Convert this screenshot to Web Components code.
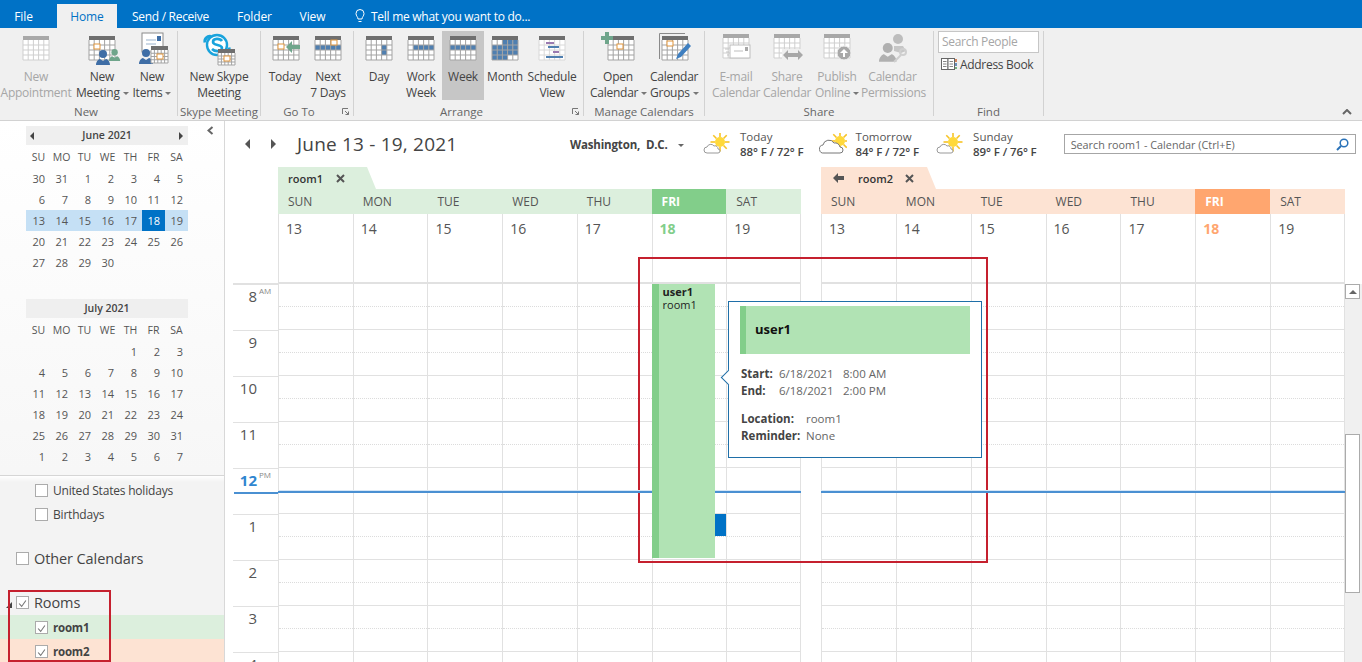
<!DOCTYPE html>
<html lang="en">
<head>
<meta charset="utf-8">
<title>Calendar - Outlook</title>
<style>
  html, body { margin: 0; height: 662px; overflow: hidden; background: #fff; }
  body { font: 12px "Open Sans", "Noto Sans", sans-serif; color: #444; }
</style>
</head>
<body>
<ol-app></ol-app>
<script>
// icon helpers
const calendar = (x, y, opts = {}) => {
  const { head = '#6f6f6f', line = '#a3a3a3', cells = [], w = 26, h = 24 } = opts;
  let out = `<rect x="${x}" y="${y}" width="${w}" height="${h}" fill="#fff"/>`;
  const cw = w / 5;
  const ch = (h - 4) / 4;
  cells.forEach(([c, r, color]) => {
    out += `<rect x="${x + c * cw}" y="${y + 4 + r * ch}" width="${cw}" height="${ch}" fill="${color}"/>`;
  });
  for (let i = 0; i <= 5; i++) out += `<path d="M${x + i * cw} ${y + 4}v${h - 4}" stroke="${line}" fill="none"/>`;
  for (let i = 1; i <= 4; i++) out += `<path d="M${x} ${y + 4 + i * ch}h${w}" stroke="${line}" fill="none"/>`;
  out += `<rect x="${x}" y="${y}" width="${w}" height="4" fill="${head}"/>`;
  return out;
};
const orange = (x, y) => `<rect x="${x}" y="${y}" width="6" height="5" fill="#fff" stroke="#e0953c"/>`;
const person = (x, y, c, s = 1) => `<g transform="translate(${x} ${y}) scale(${s})" fill="${c}"><circle cx="7" cy="4" r="4"/><path d="M0 15c0-4 3-6 4-6l3 2 3-2c1 0 4 2 4 6z"/></g>`;
const blue = '#4f7fb0';
const dim = { head: '#a8a8a8', line: '#cfcfcf' };
const weekRow = (from, to) => { const c = []; for (let i = from; i <= to; i++) c.push([i, 1, blue]); return c; };

const ICONS = {
  appointment: calendar(6, 4, dim),
  meeting: calendar(6, 4, { cells: [] }) + orange(11, 12) + person(13, 18, '#3f6ea6') + person(26, 17, '#6fa58b', .8),
  items: `<rect x="9" y="1" width="21" height="19" fill="#fff" stroke="#8a8a8a"/><path d="M13 8h10M13 12h10" stroke="#9bb3cc"/><rect x="24" y="4" width="4" height="5" fill="#3f6ea6"/>` + person(6, 17, '#3f6ea6') + calendar(18, 14, { w: 17, h: 17 }) + orange(24, 22),
  skype: `<circle cx="17" cy="13" r="10" fill="#fff" stroke="#19a3dc" stroke-width="2.4"/><path d="M11 4.5a5 5 0 0 0-6 6M23 21.500a5 5 0 0 0 6-6" stroke="#19a3dc" stroke-width="3" fill="none"/><path d="M22 9c-2-3-9-3-9 1 0 4 9 2 9 6 0 4-7 4-10 1" stroke="#19a3dc" stroke-width="2.6" fill="none"/>` + calendar(18, 17, { w: 17, h: 16 }) + orange(24, 24),
  today: calendar(6, 4) + orange(11, 12) + `<path d="M19 15l6-6v4h8v4h-8v4z" fill="#6fa58b"/>`,
  next: calendar(6, 4, { cells: weekRow(0, 4) }) + orange(22, 8),
  day: calendar(6, 4, { cells: [[3, 1, blue], [3, 2, blue]] }),
  workweek: calendar(6, 4, { cells: weekRow(1, 4) }),
  week: calendar(6, 4, { cells: weekRow(0, 4) }),
  month: calendar(6, 4, { cells: [[2, 0, blue], [3, 0, blue], [4, 0, blue], [0, 1, blue], [1, 1, blue], [2, 1, blue], [3, 1, blue], [4, 1, blue], [0, 2, blue], [1, 2, blue], [2, 2, blue], [3, 2, blue], [4, 2, blue], [0, 3, blue], [1, 3, blue], [2, 3, blue]] }),
  schedule: calendar(6, 4, { line: '#d8d8d8' }) + `<rect x="13" y="10" width="8" height="2" fill="#9a7ab0"/><rect x="15" y="14" width="11" height="2" fill="${blue}"/><rect x="20" y="19" width="6" height="2" fill="#9a7ab0"/><rect x="13" y="24" width="17" height="2" fill="${blue}"/>`,
  open: calendar(9, 4) + orange(18, 12) + `<path d="M6 0h4v4h4v4h-4v4H6V8H2V4h4z" fill="#6fa58b"/>`,
  groups: `<path d="M4.500 27V1.500H30" stroke="#8a8a8a" fill="none"/>` + calendar(7, 4) + orange(12, 9) + `<path d="M21 27l2-5 10-11 3 3-10 11z" fill="#3f7fc0"/>`,
  email: calendar(6, 2, dim) + `<rect x="13" y="13" width="20" height="13" fill="#fff" stroke="#bdbdbd"/><path d="M17 19h9" stroke="#bdbdbd"/><rect x="28" y="15" width="3" height="4" fill="#a8a8a8"/><path d="M8 17h4M9 20h3M10 23h2" stroke="#c4c4c4"/>`,
  share: calendar(6, 2, dim) + `<rect x="14" y="17" width="22" height="12" fill="#f0f0f0"/><path d="M15 23l5-5v3h10v-3l5 5-5 5v-3H20v3z" fill="#a8a8a8"/>`,
  publish: calendar(6, 2, dim) + `<circle cx="26" cy="21" r="7" fill="#a8a8a8" stroke="#f0f0f0"/><path d="M26 17l4 4h-3v4h-2v-4h-3z" fill="#fff"/>`,
  permissions: person(5, 11, '#b0b0b0', 1.25) + `<circle cx="24" cy="7" r="5" fill="#bdbdbd"/><path d="M20 14h9l3 5-5 2-7-2z" fill="#c6c6c6"/><circle cx="29" cy="20" r="3" fill="none" stroke="#cfcfcf" stroke-width="2"/><path d="M27 23l-7 7" stroke="#cfcfcf" stroke-width="2"/>`
};

const weather = (big) => {
  let rays = '';
  for (let i = 0; i < 8; i++) {
    const a = i * Math.PI / 4;
    rays += `<path d="M${17 + 5 * Math.cos(a)} ${9 + 5 * Math.sin(a)}L${17 + 9.500 * Math.cos(a)} ${9 + 9.500 * Math.sin(a)}" stroke="#f7c325" stroke-width="1.600"/>`;
  }
  const sun = `<circle cx="17" cy="9" r="5" fill="#ffd93b"/>${rays}`;
  const cloud = big
    ? `<path d="M5 20a4 4 0 0 1-1-8 6 6 0 0 1 11-2 5 5 0 0 1 6 4 3 3 0 0 1 0 6z" fill="#fff" stroke="#777"/>`
    : `<path d="M4 20a3 3 0 0 1 0-6 4 4 0 0 1 7-1 3 3 0 0 1 4 3 2 2 0 0 1 0 4z" fill="#fff" stroke="#999"/>`;
  return `<svg width="28" height="22" viewBox="0 0 28 22">${big ? `<g transform="translate(4 -1)">${sun}</g>` : sun}${cloud}</svg>`;
};

class OlTabs extends HTMLElement {
  constructor() {
    super();
    this.attachShadow({ mode: 'open' }).innerHTML = `
      <style>
        :host { display: flex; height: 28px; background: #0072c6; color: #fff; font-size: 12px; box-sizing: border-box; padding-top: 4px; letter-spacing: -.1px; }
        span { display: flex; align-items: center; justify-content: center; height: 24px; white-space: nowrap; flex: none; }
        .home { background: #f0f0f0; color: #0072c6; }
        svg { margin-right: 6px; }
      </style>
      <span style="width:57px;padding-right:10px;box-sizing:border-box">File</span>
      <span class="home" style="width:60px">Home</span>
      <span style="margin-left:15px;width:77px;letter-spacing:-.3px">Send / Receive</span>
      <span style="margin-left:29px;width:33px">Folder</span>
      <span style="margin-left:29px;width:25px">View</span>
      <span style="margin-left:30px;letter-spacing:-.27px">
        <svg width="10" height="14" viewBox="0 0 10 14" fill="none" stroke="#fff"><path d="M3 10C3 8 1 7 1 4.500a4 4 0 0 1 8 0C9 7 7 8 7 10zM3.500 12.500h3"/></svg>
        Tell me what you want to do...
      </span>`;
  }
}

class OlBtn extends HTMLElement {
  constructor() {
    super();
    const w = this.getAttribute('w') || 42;
    const icon = ICONS[this.getAttribute('icon')] || '';
    const caret = this.hasAttribute('caret') ? '<i></i>' : '';
    this.attachShadow({ mode: 'open' }).innerHTML = `
      <style>
        :host { display: block; height: 69px; width: ${w}px; flex: none; text-align: center; line-height: 16px; font-size: 12px; color: #444; margin-left: ${this.getAttribute('ml') || 0}px; }
        :host([disabled]) { color: #a6a6a6; }
        :host([active]) { background: #c6c6c6; }
        svg { display: block; margin: 1px auto 0; width: 38px; height: 36px; }
        .lbl { display: block; margin-top: 1px; white-space: nowrap; letter-spacing: -.25px; }
        i { display: inline-block; margin-left: 3px; vertical-align: 2px; border: 3px solid transparent; border-top-color: #777; border-bottom: 0; }
      </style>
      <svg viewBox="0 0 38 36">${icon}</svg>
      <span class="lbl"><slot></slot>${caret}</span>`;
  }
}

class OlGroup extends HTMLElement {
  constructor() {
    super();
    const launcher = this.hasAttribute('launcher')
      ? '<svg class="launch" width="7" height="7" viewBox="0 0 7 7" fill="none" stroke="#777"><path d="M.5 6V.5H6M3 3l3.500 3.500M6.500 3.500v3h-3"/></svg>'
      : '';
    this.attachShadow({ mode: 'open' }).innerHTML = `
      <style>
        :host { display: flex; flex-direction: column; position: relative; flex: none; box-sizing: border-box; width: ${this.getAttribute('w')}px; height: 85px; margin-top: 3px; border-right: 1px solid #d2d2d2; }
        .body { display: flex; height: 73px; justify-content: ${this.getAttribute('justify') || 'flex-start'}; padding-left: ${this.getAttribute('pl') || 0}px; }
        .cap { text-align: center; height: 12px; line-height: 16px; font-size: 11.500px; color: #666; white-space: nowrap; padding-right: ${this.getAttribute('cap-pr') || 0}px; }
        .launch { position: absolute; right: 4px; bottom: 1px; }
      </style>
      <div class="body"><slot></slot></div>
      <div class="cap">${this.getAttribute('label')}</div>${launcher}`;
  }
}

class OlRibbon extends HTMLElement {
  constructor() {
    super();
    this.attachShadow({ mode: 'open' }).innerHTML = `
      <style>
        :host { display: flex; position: relative; height: 93px; box-sizing: border-box; background: #f0f0f0; border-bottom: 1px solid #d2d2d2; }
        .up { position: absolute; right: 10px; bottom: 5px; }
      </style>
      <slot></slot>
      <svg class="up" width="10" height="6" viewBox="0 0 10 6" fill="none" stroke="#666" stroke-width="2"><path d="M1 5l4-4 4 4"/></svg>`;
  }
}

class OlFind extends HTMLElement {
  constructor() {
    super();
    this.attachShadow({ mode: 'open' }).innerHTML = `
      <style>
        :host { display: flex; flex-direction: column; padding: 0 0 0 4px; font-size: 12px; letter-spacing: -.3px; }
        .box { box-sizing: border-box; width: 101px; height: 22px; background: #fff; border: 1px solid #c6c6c6; color: #a6a6a6; line-height: 20px; padding-left: 3px; }
        .ab { display: flex; align-items: center; gap: 3px; height: 16px; margin: 3px 0 0 3px; color: #444; }
      </style>
      <div class="box">Search People</div>
      <div class="ab">
        <svg width="16" height="13" viewBox="0 0 16 13" fill="#fff" stroke="#666"><rect x=".5" y=".5" width="6.500" height="11"/><rect x="7" y=".5" width="6.500" height="11"/><path d="M2 3.500h3.500M2 6h3.500M2 8.500h3.500M8.500 3.500H12M8.500 6H12M8.500 8.500H12" stroke-width=".8"/><path d="M15 1v3" stroke="#c8602a" stroke-width="1.500"/><path d="M15 5v3" stroke="#3f6ea6" stroke-width="1.500"/><path d="M15 9v2" stroke="#4a9a5a" stroke-width="1.500"/></svg>
        <span>Address Book</span>
      </div>`;
  }
}

class OlMiniCal extends HTMLElement {
  constructor() {
    super();
    const rows = this.getAttribute('rows').split('|').map((r) => r.split(' '));
    const week = this.getAttribute('week');
    const today = this.getAttribute('today');
    const heads = ['SU', 'MO', 'TU', 'WE', 'TH', 'FR', 'SA'].map((d) => `<span>${d}</span>`).join('');
    const body = rows.map((r, i) => `<div class="row ${String(i) === week ? 'wk' : ''}">${r.map((d) =>
      `<b class="${d === today ? 'today' : ''}">${d === '_' ? '' : d}</b>`).join('')}</div>`).join('');
    const arrows = this.hasAttribute('arrows')
      ? '<i class="l"></i><i class="r"></i>' : '';
    this.attachShadow({ mode: 'open' }).innerHTML = `
      <style>
        :host { display: block; width: 162px; margin-left: 26px; font-size: 11px; color: #555; }
        .title { position: relative; height: 19px; line-height: 19px; background: #efefef; text-align: center; font-weight: 600; color: #444; font-size: 10.500px; }
        i { position: absolute; top: 6px; border: 4px solid transparent; }
        .l { left: 4px; border-right-color: #444; border-left: 0; }
        .r { right: 5px; border-left-color: #444; border-right: 0; }
        .head, .row { display: grid; grid-template-columns: repeat(7, 1fr); padding-left: 1px; }
        .head { height: 22px; line-height: 23px; margin-top: 1px; text-align: center; font-size: 10.500px; }
        .row { height: 21px; line-height: 21px; }
        .row b { font-weight: 400; text-align: right; padding-right: 5px; }
        .wk { background: #c5e0f5; }
        .today { background: #0072c6; color: #fff; }
      </style>
      <div class="title">${this.getAttribute('month')}${arrows}</div>
      <div class="head">${heads}</div>
      ${body}`;
  }
}

class OlCheck extends HTMLElement {
  constructor() {
    super();
    const tick = this.hasAttribute('checked')
      ? '<svg width="13" height="13" viewBox="0 0 13 13" fill="none" stroke="#777" stroke-width="1.300"><path d="M2.500 6.500l3 3.500 5-7"/></svg>' : '';
    this.attachShadow({ mode: 'open' }).innerHTML = `
      <style>
        :host { display: flex; align-items: center; gap: 5px; height: 24px; padding-left: ${this.getAttribute('indent') || 0}px; background: ${this.getAttribute('tint') || 'transparent'}; color: #444; white-space: nowrap; }
        .box { box-sizing: border-box; width: 13px; height: 13px; background: #fff; border: 1px solid #ababab; flex: none; display: flex; }
      </style>
      <span class="box">${tick}</span><span><slot></slot></span>`;
  }
}

class OlNav extends HTMLElement {
  constructor() {
    super();
    this.attachShadow({ mode: 'open' }).innerHTML = `
      <style>
        :host { display: block; position: relative; box-sizing: border-box; width: 225px; height: 541px; overflow: hidden; padding-top: 5px; border-right: 1px solid #d8d8d8; background: linear-gradient(#fff 0, #f7f7f7 350px); }
        .list { margin-top: 8px; border-top: 1px solid #d6d6d6; padding-top: 2px; height: 186px; background: linear-gradient(#fff, #f3f3f3 6px); }
        .chev { position: absolute; left: 207px; top: 5px; }
        .small { font-size: 12px; letter-spacing: -.2px; }
        .big { font-size: 14.500px; letter-spacing: -.1px; }
        .sub { width: 203px; font-weight: 700; font-size: 11.500px; letter-spacing: -.2px; }
        .tri { position: absolute; left: 6px; top: 481px; width: 0; height: 0; border: 3px solid transparent; border-right-color: #444; border-bottom-color: #444; }
      </style>
      <svg class="chev" width="7" height="9" viewBox="0 0 7 9" fill="none" stroke="#666" stroke-width="2"><path d="M5.500 1l-4 3.500 4 3.500"/></svg>
      <ol-mini-cal month="June 2021" arrows week="2" today="18"
        rows="30 31 1 2 3 4 5|6 7 8 9 10 11 12|13 14 15 16 17 18 19|20 21 22 23 24 25 26|27 28 29 30 _ _ _"></ol-mini-cal>
      <ol-mini-cal style="margin-top:26px" month="July 2021"
        rows="_ _ _ _ 1 2 3|4 5 6 7 8 9 10|11 12 13 14 15 16 17|18 19 20 21 22 23 24|25 26 27 28 29 30 31|1 2 3 4 5 6 7"></ol-mini-cal>
      <div class="list">
        <ol-check class="small" indent="35">United States holidays</ol-check>
        <ol-check class="small" indent="35">Birthdays</ol-check>
        <div style="height:20px"></div>
        <ol-check class="big" indent="16">Other Calendars</ol-check>
        <div style="height:20px"></div>
        <ol-check class="big" indent="16" checked>Rooms</ol-check>
        <ol-check class="sub" indent="35" checked tint="#dcefdd" style="margin-top:1px">room1</ol-check>
        <ol-check class="sub" indent="35" checked tint="#fde3d3">room2</ol-check>
      </div>
      <div class="tri"></div>`;
  }
}

class OlWeather extends HTMLElement {
  constructor() {
    super();
    this.attachShadow({ mode: 'open' }).innerHTML = `
      <style>
        :host { display: flex; align-items: center; gap: 9px; margin-left: ${this.getAttribute('ml')}px; }
        div { line-height: 15px; font-size: 11.500px; color: #555; white-space: nowrap; }
        b { display: block; font-weight: 600; font-size: 11.500px; color: #444; letter-spacing: -.1px; }
        svg { display: block; }
      </style>
      ${weather(this.hasAttribute('cloudy'))}
      <div>${this.getAttribute('day')}<b>${this.getAttribute('temp')}</b></div>`;
  }
}

class OlDateBar extends HTMLElement {
  constructor() {
    super();
    this.attachShadow({ mode: 'open' }).innerHTML = `
      <style>
        :host { display: flex; align-items: center; height: 46px; box-sizing: border-box; padding: 0 0 0 20px; color: #444; }
        .arr { width: 0; height: 0; border: 5px solid transparent; }
        .prev { border-right-color: #555; border-left: 0; }
        .next { border-left-color: #555; border-right: 0; margin-left: 21px; }
        h1 { margin: 0 0 0 21px; width: 273px; font-weight: 400; font-size: 19px; letter-spacing: .2px; color: #444; white-space: nowrap; }
        .loc { font-weight: 700; font-size: 11.500px; letter-spacing: -.15px; width: 97px; white-space: nowrap; }
        .drop { border: 3px solid transparent; border-top-color: #666; border-bottom: 0; margin: 2px 0 0 11px; }
        .search { display: flex; align-items: center; justify-content: space-between; box-sizing: border-box; width: 292px; height: 20px; margin-left: 27px; padding: 0 6px; border: 1px solid #a6a6a6; font-size: 10.800px; color: #666; }
      </style>
      <div class="arr prev"></div><div class="arr next"></div>
      <h1>June 13 - 19, 2021</h1>
      <div class="loc">Washington,&nbsp; D.C.</div><div class="drop"></div>
      <ol-weather ml="19" day="Today" temp="88° F / 72° F"></ol-weather>
      <ol-weather ml="15" cloudy day="Tomorrow" temp="84° F / 72° F"></ol-weather>
      <ol-weather ml="17" day="Sunday" temp="89° F / 76° F"></ol-weather>
      <div class="search"><span>Search room1 - Calendar (Ctrl+E)</span>
        <svg width="13" height="13" viewBox="0 0 13 13" fill="none" stroke="#2a72b8" stroke-width="1.500"><circle cx="8" cy="5" r="3.800"/><path d="M5 8l-4 4" stroke-width="2"/></svg>
      </div>`;
  }
}

// hour cells: 46px each, dotted half hour, solid on the hour
const hourCells = (n) => '<div class="h"></div>'.repeat(n);

class OlPane extends HTMLElement {
  constructor() {
    super();
    const name = this.getAttribute('room');
    const tint = this.getAttribute('tint');
    const strong = this.getAttribute('strong');
    const back = this.hasAttribute('back')
      ? '<svg class="back" width="12" height="10" viewBox="0 0 12 10"><path d="M0 5l5-5v3h6v4H5v3z" fill="#555"/></svg>' : '';
    const days = ['SUN', 'MON', 'TUE', 'WED', 'THU', 'FRI', 'SAT'];
    const dates = [13, 14, 15, 16, 17, 18, 19];
    const heads = days.map((d, i) => `<div class="${i === 5 ? 'fri' : ''}">${d}</div>`).join('');
    const nums = dates.map((d, i) => `<div class="${i === 5 ? 'now' : ''}">${d}</div>`).join('');
    const cols = dates.map((d, i) => `<div class="col">${hourCells(9)}${i === 5 ? '<slot></slot>' : ''}</div>`).join('');
    this.attachShadow({ mode: 'open' }).innerHTML = `
      <style>
        :host { display: block; min-width: 0; }
        .tab { position: relative; display: flex; align-items: center; box-sizing: border-box; height: 22px; width: ${this.getAttribute('tabw')}px; padding-left: 10px; font-size: 11px; font-weight: 600; color: #333; background: ${tint}; clip-path: polygon(0 0, calc(100% - 9px) 0, 100% 100%, 0 100%); }
        .back { margin: 0 13px 0 2px; }
        .x { margin-left: ${this.hasAttribute('back') ? 12 : 13}px; }
        .heads, .dates, .grid { display: grid; grid-template-columns: repeat(7, 1fr); }
        .heads { height: 25px; background: ${tint}; line-height: 25px; font-size: 12px; color: #555; }
        .heads div { padding-left: 10px; }
        .heads .fri { background: ${strong}; color: #fff; font-weight: 700; }
        .dates { height: 68px; }
        .dates div { padding: 5px 0 0 7px; font-size: 14px; line-height: 20px; color: #555; border-left: 1px solid #e1e1e1; }
        .dates div:last-child, .col:last-child { border-right: 1px solid #e1e1e1; }
        .dates .now { color: ${strong}; font-weight: 700; }
        .grid { position: relative; border-top: 2px solid #e1e1e1; height: 420px; overflow: hidden; }
        .col { position: relative; border-left: 1px solid #e1e1e1; min-width: 0; }
        .h { box-sizing: border-box; height: 46px; border-bottom: 1px solid #e1e1e1; }
        .h::before { content: ''; display: block; height: 22px; border-bottom: 1px dotted #dcdcdc; }
        .nowline { position: absolute; z-index: 1; left: 0; right: 0; top: 207px; height: 2px; background: #4a90d2; box-shadow: 0 -1px 0 #d5e6f6; }
      </style>
      <div class="tab">${back}<span>${name}</span>
        <svg class="x" width="9" height="9" viewBox="0 0 9 9" stroke="#555" stroke-width="2"><path d="M1 1l7 7M8 1l-7 7"/></svg>
      </div>
      <div class="heads">${heads}</div>
      <div class="dates">${nums}</div>
      <div class="grid"><div class="nowline"></div>${cols}</div>`;
  }
}

class OlTimes extends HTMLElement {
  constructor() {
    super();
    const labels = [['8', 'AM'], ['9'], ['10'], ['11'], ['12', 'PM'], ['1'], ['2'], ['3'], ['4']];
    const rows = labels.map(([n, m]) => `<div class="t ${n === '12' ? 'noon' : ''}"><span class="n">${n}</span><sup>${m || ''}</sup></div>`).join('');
    this.attachShadow({ mode: 'open' }).innerHTML = `
      <style>
        :host { display: block; position: relative; padding-top: 116px; }
        .wrap { margin-left: 8px; border-top: 2px solid #e1e1e1; height: 420px; overflow: hidden; position: relative; }
        .t { display: flex; box-sizing: border-box; height: 46px; border-bottom: 1px solid #e1e1e1; padding-top: 1px; color: #555; }
        .n { width: 24px; text-align: right; font-size: 15px; line-height: 20px; }
        sup { margin: 0 0 0 2px; font-size: 8px; line-height: 10px; color: #888; vertical-align: baseline; }
        .noon .n { color: #2f86d0; font-weight: 700; }
        .nowline { position: absolute; left: 1px; right: 0; top: 207px; height: 2px; background: #4a90d2; }
      </style>
      <div class="wrap">${rows}<div class="nowline"></div></div>`;
  }
}

class OlEvent extends HTMLElement {
  constructor() {
    super();
    this.attachShadow({ mode: 'open' }).innerHTML = `
      <style>
        :host { position: absolute; z-index: 2; left: -1px; top: 0; width: 63px; height: 274px; box-sizing: border-box; padding: 1px 0 0 11px; background: linear-gradient(90deg, #82ce8a 7px, #b1e3b4 7px); font-size: 11px; line-height: 13px; color: #222; }
        b { display: block; font-weight: 700; }
        i { position: absolute; left: 63px; top: 230px; width: 11px; height: 22px; background: #0072c6; }
      </style>
      <b>user1</b>room1<i></i>`;
  }
}

class OlPeek extends HTMLElement {
  constructor() {
    super();
    this.attachShadow({ mode: 'open' }).innerHTML = `
      <style>
        :host { position: absolute; left: 728px; top: 301px; box-sizing: border-box; width: 254px; height: 157px; background: #fff; border: 1px solid #1f6fa8; padding: 4px 11px; font-size: 11.500px; color: #666; }
        .tip { position: absolute; left: -6px; top: 70px; width: 10px; height: 10px; background: #fff; border-left: 1px solid #1f6fa8; border-bottom: 1px solid #1f6fa8; transform: rotate(45deg); }
        .head { box-sizing: border-box; height: 48px; line-height: 46px; padding-left: 15px; background: linear-gradient(90deg, #82ce8a 6px, #b1e3b4 6px); font-size: 13px; font-weight: 700; color: #111; }
        .r { display: grid; grid-template-columns: 38px 64px auto; height: 17px; line-height: 17px; margin-left: 1px; white-space: nowrap; }
        .l { grid-template-columns: 65px auto; }
        b { font-weight: 700; color: #444; }
      </style>
      <div class="tip"></div>
      <div class="head">user1</div>
      <div style="height:11px"></div>
      <div class="r"><b>Start:</b><span>6/18/2021</span><span>8:00 AM</span></div>
      <div class="r"><b>End:</b><span>6/18/2021</span><span>2:00 PM</span></div>
      <div style="height:11px"></div>
      <div class="r l"><b>Location:</b><span>room1</span></div>
      <div class="r l"><b>Reminder:</b><span>None</span></div>`;
  }
}

// red callout boxes drawn on top of the screenshot
class OlMark extends HTMLElement {
  constructor() {
    super();
    const [x, y, w, h] = this.getAttribute('rect').split(' ');
    this.attachShadow({ mode: 'open' }).innerHTML = `
      <style>
        :host { position: absolute; left: ${x}px; top: ${y}px; width: ${w}px; height: ${h}px; box-sizing: border-box; border: 2px solid #c5202e; pointer-events: none; }
      </style>`;
  }
}

class OlScroll extends HTMLElement {
  constructor() {
    super();
    this.attachShadow({ mode: 'open' }).innerHTML = `
      <style>
        :host { display: block; padding-top: 117px; }
        .track { height: 420px; background: #f0f0f0; }
        .btn { box-sizing: border-box; width: 15px; height: 15px; background: #fff; border: 1px solid #ababab; display: flex; align-items: center; justify-content: center; }
        .btn i { border: 4px solid transparent; border-bottom-color: #666; border-top: 0; }
        .thumb { box-sizing: border-box; width: 15px; height: 159px; margin-top: 135px; background: #fff; border: 1px solid #ababab; }
      </style>
      <div class="track"><div class="btn"><i></i></div><div class="thumb"></div></div>`;
  }
}

class OlApp extends HTMLElement {
  constructor() {
    super();
    this.attachShadow({ mode: 'open' }).innerHTML = `
      <style>
        :host { display: block; position: relative; width: 1362px; height: 662px; overflow: hidden; }
        .body { display: flex; }
        .main { flex: 1; min-width: 0; }
        .panes { display: grid; grid-template-columns: 53px 523px 20px 524px 17px; height: 495px; overflow: hidden; }
      </style>
      <ol-tabs></ol-tabs>
      <ol-ribbon>
        <ol-group w="178" label="New" cap-pr="5">
          <ol-btn icon="appointment" w="72" disabled>New<br>Appointment</ol-btn>
          <ol-btn icon="meeting" w="52" ml="4" caret>New<br>Meeting</ol-btn>
          <ol-btn icon="items" w="40" ml="4" caret>New<br>Items</ol-btn>
        </ol-group>
        <ol-group w="83" label="Skype Meeting" justify="center">
          <ol-btn icon="skype" w="60">New Skype<br>Meeting</ol-btn>
        </ol-group>
        <ol-group w="93" label="Go To" launcher cap-pr="16">
          <ol-btn icon="today" w="36" ml="6">Today</ol-btn>
          <ol-btn icon="next" w="40" ml="5">Next<br>7 Days</ol-btn>
        </ol-group>
        <ol-group w="230" label="Arrange" launcher pl="4" cap-pr="14">
          <ol-btn icon="day" w="42">Day</ol-btn>
          <ol-btn icon="workweek" w="42">Work<br>Week</ol-btn>
          <ol-btn icon="week" w="42" active>Week</ol-btn>
          <ol-btn icon="month" w="42">Month</ol-btn>
          <ol-btn icon="schedule" w="50" ml="1">Schedule<br>View</ol-btn>
        </ol-group>
        <ol-group w="121" label="Manage Calendars">
          <ol-btn icon="open" w="56" ml="6" caret>Open<br>Calendar</ol-btn>
          <ol-btn icon="groups" w="47" ml="4" caret>Calendar<br>Groups</ol-btn>
        </ol-group>
        <ol-group w="229" label="Share">
          <ol-btn icon="email" w="48" ml="7" disabled>E-mail<br>Calendar</ol-btn>
          <ol-btn icon="share" w="48" ml="3" disabled>Share<br>Calendar</ol-btn>
          <ol-btn icon="publish" w="44" ml="4" disabled caret>Publish<br>Online</ol-btn>
          <ol-btn icon="permissions" w="63" ml="2" disabled>Calendar<br>Permissions</ol-btn>
        </ol-group>
        <ol-group w="110" label="Find">
          <ol-find></ol-find>
        </ol-group>
      </ol-ribbon>
      <div class="body">
        <ol-nav></ol-nav>
        <div class="main">
          <ol-date-bar></ol-date-bar>
          <div class="panes">
            <ol-times></ol-times>
            <ol-pane room="room1" tint="#dcefdd" strong="#82ce8a" tabw="98"><ol-event></ol-event></ol-pane>
            <div></div>
            <ol-pane room="room2" tint="#fde3d3" strong="#ffa66f" tabw="115" back></ol-pane>
            <ol-scroll></ol-scroll>
          </div>
        </div>
      </div>
      <ol-peek></ol-peek>
      <ol-mark rect="638 257 350 306"></ol-mark>
      <ol-mark rect="8 590 103 72"></ol-mark>`;
  }
}

customElements.define('ol-tabs', OlTabs);
customElements.define('ol-btn', OlBtn);
customElements.define('ol-group', OlGroup);
customElements.define('ol-ribbon', OlRibbon);
customElements.define('ol-find', OlFind);
customElements.define('ol-mini-cal', OlMiniCal);
customElements.define('ol-check', OlCheck);
customElements.define('ol-nav', OlNav);
customElements.define('ol-weather', OlWeather);
customElements.define('ol-date-bar', OlDateBar);
customElements.define('ol-pane', OlPane);
customElements.define('ol-times', OlTimes);
customElements.define('ol-event', OlEvent);
customElements.define('ol-peek', OlPeek);
customElements.define('ol-mark', OlMark);
customElements.define('ol-scroll', OlScroll);
customElements.define('ol-app', OlApp);
</script>
</body>
</html>
